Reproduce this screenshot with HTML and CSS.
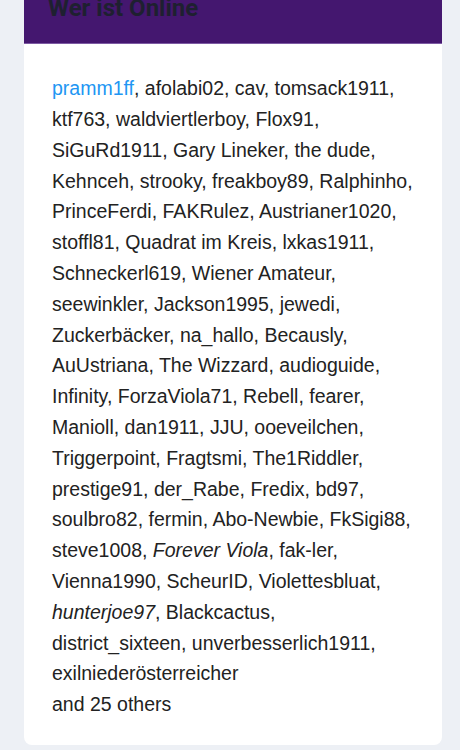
FILE: index.html
```html
<!DOCTYPE html>
<html lang="de">
<head>
<meta charset="utf-8">
<link rel="stylesheet" href="styles.css">
</head>
<body>
<div class="card">
  <div class="card-header"><h2 class="title">Wer ist Online</h2></div>
  <div class="card-body">
    <div class="users"><a class="me" href="#">pramm1ff</a>, afolabi02, cav, tomsack1911, ktf763, waldviertlerboy, Flox91, SiGuRd1911, Gary Lineker, the dude, Kehnceh, strooky, freakboy89, Ralphinho, PrinceFerdi, FAKRulez, Austrianer1020, stoffl81, Quadrat im Kreis, lxkas1911, Schneckerl619, Wiener Amateur, seewinkler, Jackson1995, jewedi, Zuckerbäcker, na_hallo, Becausly, AuUstriana, The Wizzard, audioguide, Infinity, ForzaViola71, Rebell, fearer, Manioll, dan1911, JJU, ooeveilchen, Triggerpoint, Fragtsmi, The1Riddler, prestige91, der_Rabe, Fredix, bd97, soulbro82, fermin, Abo-Newbie, FkSigi88, steve1008, <em>Forever Viola</em>, fak-ler, Vienna1990, ScheurID, Violettesbluat, <em>hunterjoe97</em>, Blackcactus, district_sixteen, unverbesserlich1911, exilniederösterreicher</div>
    <div class="others">and 25 others</div>
  </div>
</div>
</body>
</html>
```
FILE: styles.css
```css
html, body {
  margin: 0;
  padding: 0;
  background: #edf0f5;
}
body {
  padding: 0 18px 0 24px;
  font-family: "Liberation Sans", Arial, sans-serif;
}
.card {
  margin-top: -22px;
  background: #ffffff;
  border-radius: 0 0 8px 8px;
  overflow: hidden;
}
.card-header {
  background: #44176f;
  border-bottom: 1px solid #7d5aa3;
  padding: 16px 24px 20px;
}
.title {
  margin: 0;
  font-family: Roboto, "Liberation Sans", sans-serif;
  font-weight: 700;
  font-size: 24px;
  line-height: 28.8px;
  color: #1e2030;
}
.card-body {
  padding: 29.5px 28px 25px;
  font-size: 19.5px;
  line-height: 30.8px;
  color: #222222;
}
.me {
  color: #2196f3;
  text-decoration: none;
}
.users em {
  font-style: italic;
}
```
